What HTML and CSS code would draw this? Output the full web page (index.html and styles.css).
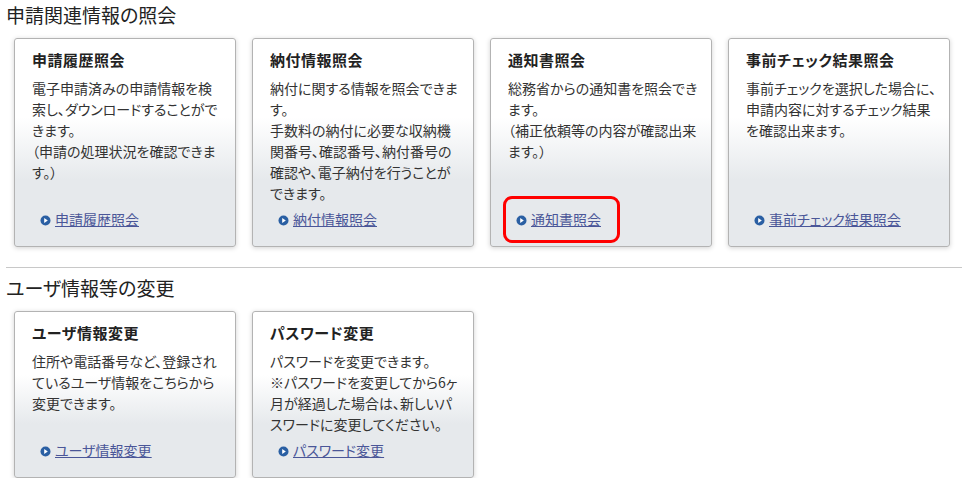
FILE: index.html
```html
<!DOCTYPE html>
<html lang="ja">
<head>
  <meta charset="UTF-8" />
  <title>申請関連情報の照会</title>
  <link rel="stylesheet" href="styles.css">
</head>
<body>
  <div class="page">
    <!-- 照会 -->
    <h2 class="section-title">申請関連情報の照会</h2>
    <div class="cards">
      <div class="card">
        <h3 class="card-title">申請履歴照会</h3>
        <p class="card-desc">電子申請済みの申請情報を検<br>索し、ダウンロードすることがで<br>きます。<br>（申請の処理状況を確認できま<br>す。）</p>
        <div class="card-link"><a href="#"><span class="arrow"><svg width="11" height="11" viewBox="0 0 11 11"><circle cx="5.5" cy="5.5" r="5" fill="#2a5fa3"/><path d="M4.2 3.1 L7.8 5.5 L4.2 7.9 Z" fill="#fff"/></svg></span>申請履歴照会</a></div>
      </div>
      <div class="card">
        <h3 class="card-title">納付情報照会</h3>
        <p class="card-desc">納付に関する情報を照会できま<br>す。<br>手数料の納付に必要な収納機<br>関番号、確認番号、納付番号の<br>確認や、電子納付を行うことが<br>できます。</p>
        <div class="card-link"><a href="#"><span class="arrow"><svg width="11" height="11" viewBox="0 0 11 11"><circle cx="5.5" cy="5.5" r="5" fill="#2a5fa3"/><path d="M4.2 3.1 L7.8 5.5 L4.2 7.9 Z" fill="#fff"/></svg></span>納付情報照会</a></div>
      </div>
      <div class="card">
        <h3 class="card-title">通知書照会</h3>
        <p class="card-desc">総務省からの通知書を照会でき<br>ます。<br>（補正依頼等の内容が確認出来<br>ます。）</p>
        <div class="card-link"><a href="#"><span class="arrow"><svg width="11" height="11" viewBox="0 0 11 11"><circle cx="5.5" cy="5.5" r="5" fill="#2a5fa3"/><path d="M4.2 3.1 L7.8 5.5 L4.2 7.9 Z" fill="#fff"/></svg></span>通知書照会<span class="highlight"></span></a></div>
      </div>
      <div class="card">
        <h3 class="card-title">事前チェック結果照会</h3>
        <p class="card-desc">事前チェックを選択した場合に、<br>申請内容に対するチェック結果<br>を確認出来ます。</p>
        <div class="card-link"><a href="#"><span class="arrow"><svg width="11" height="11" viewBox="0 0 11 11"><circle cx="5.5" cy="5.5" r="5" fill="#2a5fa3"/><path d="M4.2 3.1 L7.8 5.5 L4.2 7.9 Z" fill="#fff"/></svg></span>事前チェック結果照会</a></div>
      </div>
    </div>

    <hr class="divider" />

    <!-- 変更 -->
    <h2 class="section-title">ユーザ情報等の変更</h2>
    <div class="cards">
      <div class="card">
        <h3 class="card-title">ユーザ情報変更</h3>
        <p class="card-desc">住所や電話番号など、登録され<br>ているユーザ情報をこちらから<br>変更できます。</p>
        <div class="card-link"><a href="#"><span class="arrow"><svg width="11" height="11" viewBox="0 0 11 11"><circle cx="5.5" cy="5.5" r="5" fill="#2a5fa3"/><path d="M4.2 3.1 L7.8 5.5 L4.2 7.9 Z" fill="#fff"/></svg></span>ユーザ情報変更</a></div>
      </div>
      <div class="card">
        <h3 class="card-title">パスワード変更</h3>
        <p class="card-desc">パスワードを変更できます。<br>※パスワードを変更してから6ヶ<br>月が経過した場合は、新しいパ<br>スワードに変更してください。</p>
        <div class="card-link"><a href="#"><span class="arrow"><svg width="11" height="11" viewBox="0 0 11 11"><circle cx="5.5" cy="5.5" r="5" fill="#2a5fa3"/><path d="M4.2 3.1 L7.8 5.5 L4.2 7.9 Z" fill="#fff"/></svg></span>パスワード変更</a></div>
      </div>
    </div>
  </div>
</body>
</html>
```

FILE: styles.css
```css
body {
  margin: 0;
  background-color: #fff;
  color: #333;
  font-family: "Noto Sans CJK JP", "Noto Sans", sans-serif;
  font-feature-settings: "palt";
}

.page {
  padding: 3px 0 0 6px;
}

.section-title {
  margin: 0;
  font-size: 19px;
  line-height: 24px;
  font-weight: normal;
  color: #222;
}

.cards {
  display: flex;
  align-items: stretch;
  gap: 16px;
  margin: 11px 0 0 8px;
}

.card {
  width: 222px;
  box-sizing: border-box;
  display: flex;
  flex-direction: column;
  padding: 11px 18px 17px 17px;
  border: 1px solid #b3b3b3;
  border-radius: 3px;
  background: linear-gradient(to bottom, #fff 0, #fff 38%, #e6e9ec 68%, #e6e9ec 100%);
  box-shadow: 0 1px 5px rgba(0, 0, 0, 0.18);
}

.card-title {
  margin: 0 0 8px 0;
  font-size: 15px;
  line-height: 20px;
  font-weight: bold;
  color: #222;
  letter-spacing: 0.5px;
}

.card-desc {
  flex: 1;
  margin: 0;
  font-size: 14px;
  line-height: 21px;
  white-space: nowrap;
  color: #333;
}

.card-link {
  margin-top: 5px;
  padding-left: 8px;
  font-size: 14px;
  line-height: 20px;
}

.card-link a {
  position: relative;
  color: #4a5698;
  text-decoration: underline;
}

.arrow {
  display: inline-block;
  width: 11px;
  height: 11px;
  margin-right: 4px;
  vertical-align: -1px;
}

.arrow svg {
  display: block;
}

.highlight {
  position: absolute;
  left: -13px;
  top: -13px;
  width: 117px;
  height: 47px;
  box-sizing: border-box;
  border: 3px solid #f00;
  border-radius: 9px;
}

.divider {
  margin: 20px 17px 8px 0;
  border: none;
  border-top: 1px solid #c8c8c8;
}
```
